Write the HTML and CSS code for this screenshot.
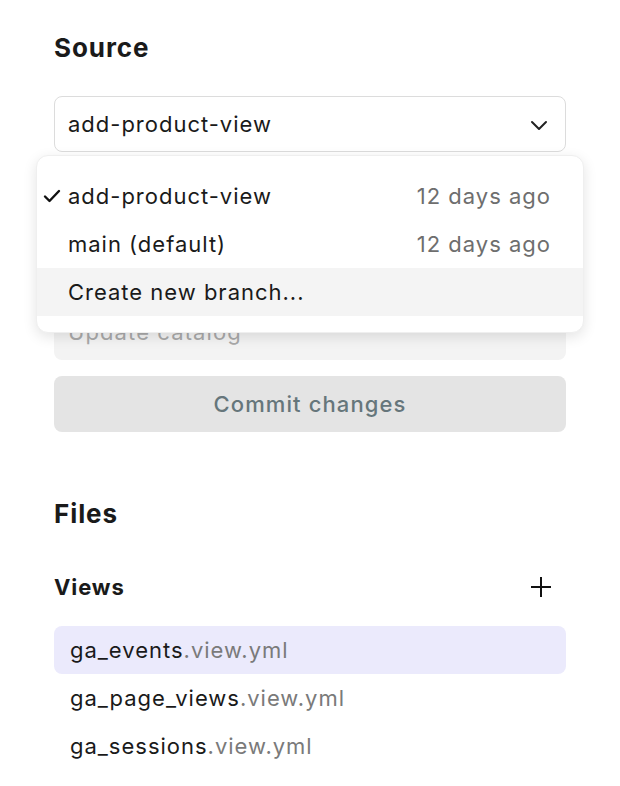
FILE: index.html
```html
<!DOCTYPE html>
<html lang="en">
<head>
    <meta charset="UTF-8">
    <meta name="viewport" content="width=device-width, initial-scale=1.0">
    <title>Source</title>
    <link rel="stylesheet" href="styles.css">
</head>
<body>
    <div class="panel">
        <h2 class="section-title">Source</h2>

        <div class="branch-picker">
            <div class="select">
                <span>add-product-view</span>
                <svg class="chevron" width="18" height="11" viewBox="0 0 18 11">
                    <path d="M2 2 L9 9 L16 2" fill="none" stroke="#222" stroke-width="2" stroke-linecap="round" stroke-linejoin="round"/>
                </svg>
            </div>

            <ul class="menu">
                <li class="menu-item">
                    <svg class="check" width="18" height="14" viewBox="0 0 18 14">
                        <path d="M2 7.5 L6.5 12 L16 2" fill="none" stroke="#111" stroke-width="2.4" stroke-linecap="round" stroke-linejoin="round"/>
                    </svg>
                    <span class="branch-name">add-product-view</span>
                    <span class="branch-date">12 days ago</span>
                </li>
                <li class="menu-item">
                    <span class="branch-name">main (default)</span>
                    <span class="branch-date">12 days ago</span>
                </li>
                <li class="menu-item active">
                    <span class="branch-name">Create new branch...</span>
                </li>
            </ul>
        </div>

        <form class="commit-form">
            <input type="text" class="commit-input" placeholder="Update catalog">
            <button type="button" class="commit-btn">Commit changes</button>
        </form>

        <h2 class="section-title files-title">Files</h2>

        <div class="group-head">
            <h3>Views</h3>
            <svg width="22" height="22" viewBox="0 0 22 22">
                <path d="M11 1 V21 M1 11 H21" stroke="#111" stroke-width="2"/>
            </svg>
        </div>

        <ul class="file-list">
            <li class="file selected">ga_events<span class="ext">.view.yml</span></li>
            <li class="file">ga_page_views<span class="ext">.view.yml</span></li>
            <li class="file">ga_sessions<span class="ext">.view.yml</span></li>
        </ul>
    </div>
</body>
</html>
```

FILE: styles.css
```css
body {
    margin: 0;
    padding: 0;
    background-color: #ffffff;
    font-family: Inter, "Noto Sans", sans-serif;
    letter-spacing: 0.062em;
    color: #1a1a1a;
}

.panel {
    padding: 32px 54px 0 54px;
}

.section-title {
    margin: 0;
    font-size: 26px;
    line-height: 32px;
    font-weight: 700;
    letter-spacing: 0.035em;
    color: #1a1a1a;
}

.branch-picker {
    position: relative;
    margin-top: 32px;
}

.select {
    display: flex;
    align-items: center;
    justify-content: space-between;
    height: 56px;
    box-sizing: border-box;
    padding: 0 17px 0 13px;
    border: 1px solid #dcdcdc;
    border-radius: 8px;
    font-size: 22px;
    color: #1a1a1a;
}

.chevron {
    margin-top: 2px;
}

.menu {
    position: absolute;
    top: 59px;
    left: -18px;
    right: -18px;
    z-index: 2;
    margin: 0;
    padding: 16px 0;
    list-style: none;
    background: #ffffff;
    border: 1px solid #efefef;
    border-radius: 12px;
    box-shadow: 0 4px 14px rgba(0, 0, 0, 0.11);
}

.menu-item {
    position: relative;
    display: flex;
    align-items: center;
    justify-content: space-between;
    height: 48px;
    padding: 0 32px 0 31px;
    font-size: 22px;
    color: #1a1a1a;
}

.menu-item.active {
    background-color: #f4f4f4;
}

.check {
    position: absolute;
    left: 6px;
    top: 17px;
}

.branch-date {
    color: #6e6e6e;
}

.commit-form {
    display: flex;
    flex-direction: column;
    gap: 16px;
    margin-top: 152px;
}

.commit-input {
    height: 56px;
    box-sizing: border-box;
    padding: 0 14px;
    border: none;
    border-radius: 8px;
    background-color: #f3f3f3;
    font-family: Inter, "Noto Sans", sans-serif;
    font-size: 22px;
    letter-spacing: 0.05em;
}

.commit-input::placeholder {
    color: #a9a9a9;
}

.commit-btn {
    height: 56px;
    border: none;
    border-radius: 8px;
    background-color: #e4e4e4;
    font-family: Inter, "Noto Sans", sans-serif;
    font-size: 22px;
    font-weight: 500;
    letter-spacing: 0.05em;
    color: #66767b;
}

.files-title {
    margin-top: 66px;
}

.group-head {
    display: flex;
    align-items: center;
    justify-content: space-between;
    margin-top: 41px;
    padding-right: 14px;
}

.group-head h3 {
    margin: 0;
    font-size: 22px;
    line-height: 32px;
    font-weight: 700;
    letter-spacing: 0.04em;
}

.file-list {
    margin: 23px 0 0 0;
    padding: 0;
    list-style: none;
}

.file {
    height: 48px;
    line-height: 48px;
    padding-left: 16px;
    border-radius: 8px;
    font-size: 22px;
    color: #1a1a1a;
}

.file.selected {
    background-color: #ebeafc;
}

.ext {
    color: #7a7a7a;
}
```
